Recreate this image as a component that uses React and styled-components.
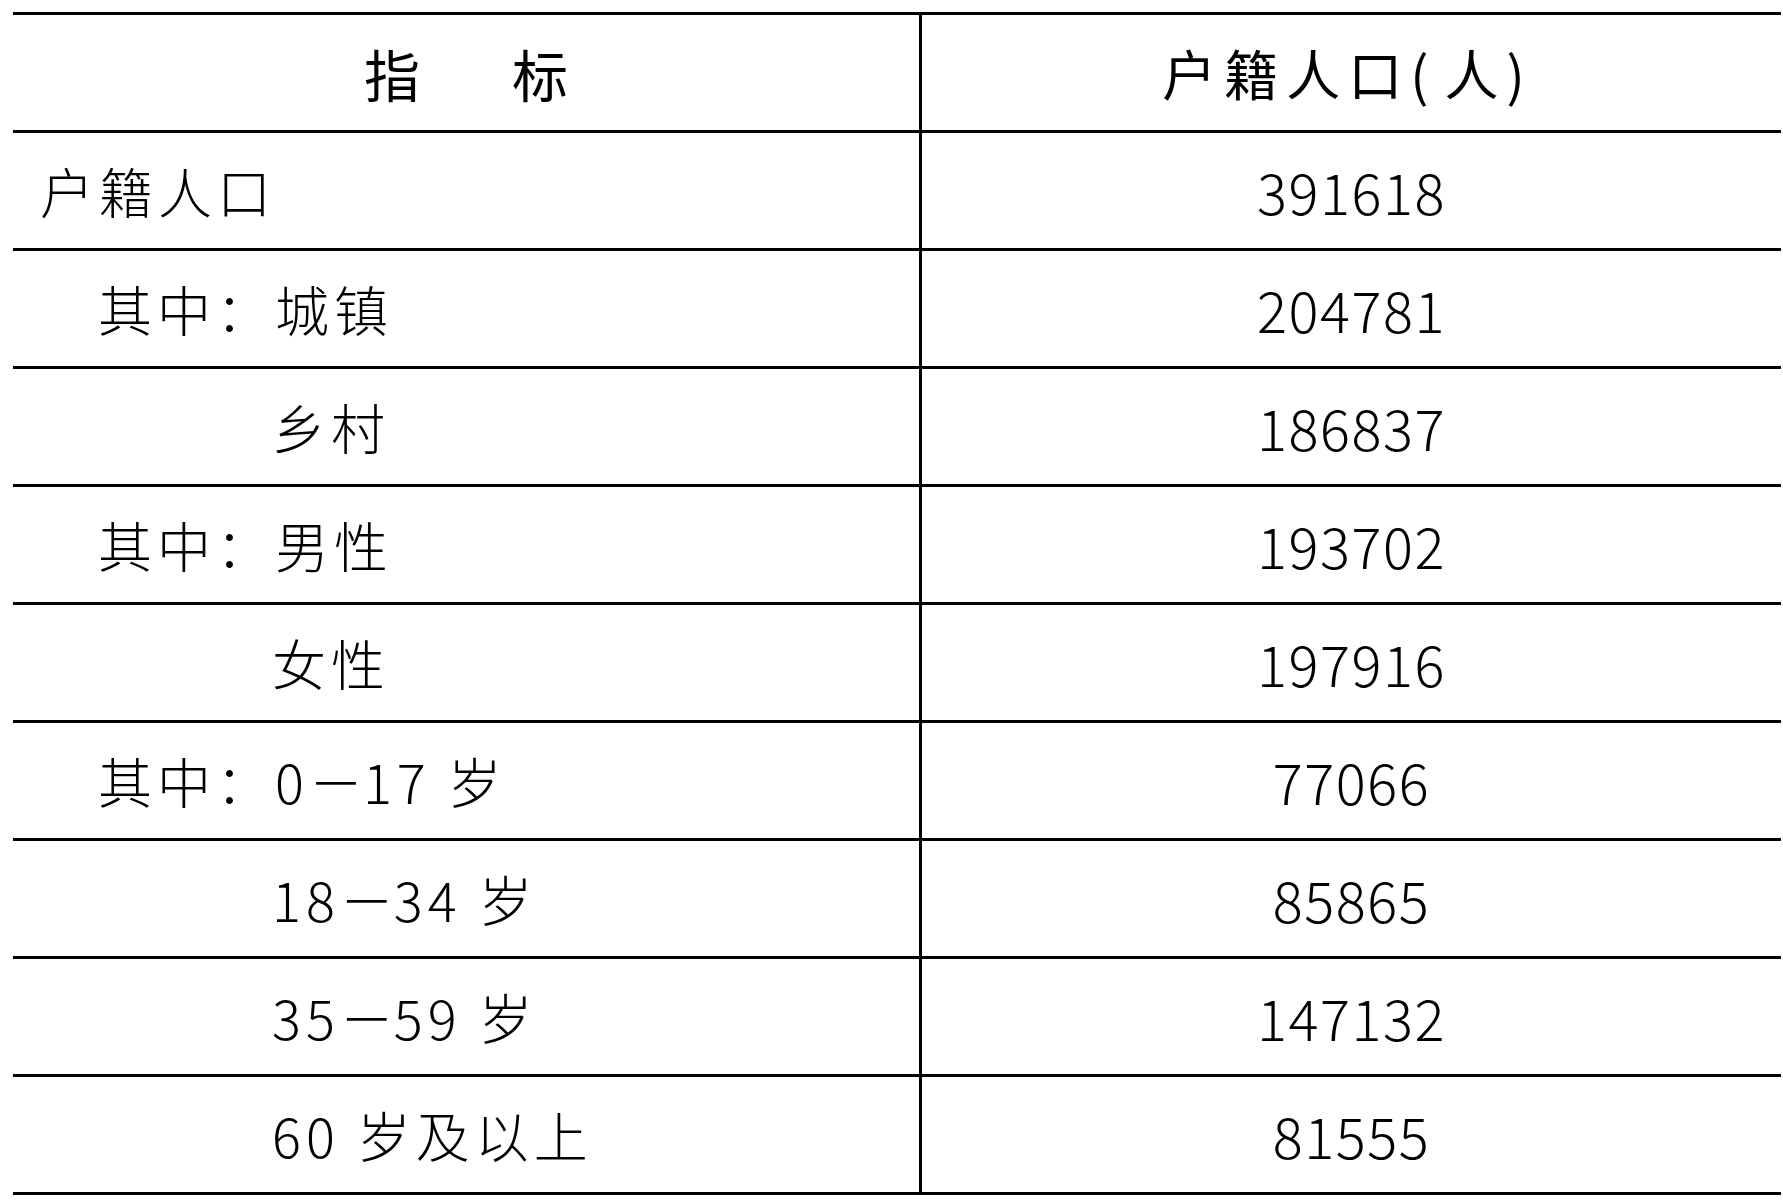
import React from "react";
import styled, { createGlobalStyle } from "styled-components";

const Global = createGlobalStyle`
  html, body {
    margin: 0;
    padding: 0;
    background: #ffffff;
  }
  body {
    font-family: "Noto Sans CJK SC", "Noto Sans", sans-serif;
    color: #000;
  }
`;

const Page = styled.div`
  padding: 12px 2px 0 13px;
  width: 1768px;
`;

const Table = styled.div`
  display: flex;
  flex-direction: column;
  border-top: 3px solid #000;
  width: 1768px;
`;

const Row = styled.div`
  display: grid;
  grid-template-columns: 909px 1fr;
  height: 118px;
  box-sizing: border-box;
  border-bottom: 3px solid #000;
`;

const LabelCell = styled.div`
  box-sizing: border-box;
  border-right: 3px solid #000;
  display: flex;
  align-items: center;
  justify-content: ${(p) => (p.$center ? "center" : "flex-start")};
  padding-left: ${(p) => (p.$center ? 0 : 27 + p.$indent * 58)}px;
  font-size: 54px;
  font-weight: ${(p) => (p.$head ? 400 : 300)};
  letter-spacing: 5px;
  white-space: pre;
  line-height: 1;
`;

const Label = styled.span`
  display: inline-block;
`;

const ValueCell = styled.div`
  display: flex;
  align-items: center;
  justify-content: center;
  font-size: ${(p) => (p.$head ? 54 : 56)}px;
  font-weight: ${(p) => (p.$head ? 400 : 300)};
  letter-spacing: ${(p) => (p.$head ? 8 : 1.5)}px;
  white-space: pre;
  line-height: 1;
`;

const HeadPair = styled.div`
  display: flex;
  gap: 92px;
  font-size: 56px;
  letter-spacing: 0;
`;

const Paren = styled.span`
  letter-spacing: 16px;
`;

const Dash = styled.span`
  letter-spacing: 0;
`;

const rows = [
  { pre: "户籍人口", indent: 0, value: "391618" },
  { pre: "其中：城镇", indent: 1, value: "204781" },
  { pre: "乡村", indent: 4, value: "186837" },
  { pre: "其中：男性", indent: 1, value: "193702" },
  { pre: "女性", indent: 4, value: "197916" },
  { pre: "其中：0", post: "17 岁", indent: 1, value: "77066" },
  { pre: "18", post: "34 岁", indent: 4, value: "85865" },
  { pre: "35", post: "59 岁", indent: 4, value: "147132" },
  { pre: "60 岁及以上", indent: 4, value: "81555" },
];

export default function App() {
  return (
    <>
      <Global />
      <Page>
        <Table>
          <Row>
            <LabelCell $center $head>
              <HeadPair>
                <span>指</span>
                <span>标</span>
              </HeadPair>
            </LabelCell>
            <ValueCell $head>
              <Label>
                户籍人口<Paren>(</Paren>人<Paren>)</Paren>
              </Label>
            </ValueCell>
          </Row>
          {rows.map((r) => (
            <Row key={r.value}>
              <LabelCell $indent={r.indent}>
                <Label>
                  {r.pre}
                  {r.post && (
                    <>
                      <Dash>－</Dash>
                      {r.post}
                    </>
                  )}
                </Label>
              </LabelCell>
              <ValueCell>{r.value}</ValueCell>
            </Row>
          ))}
        </Table>
      </Page>
    </>
  );
}
